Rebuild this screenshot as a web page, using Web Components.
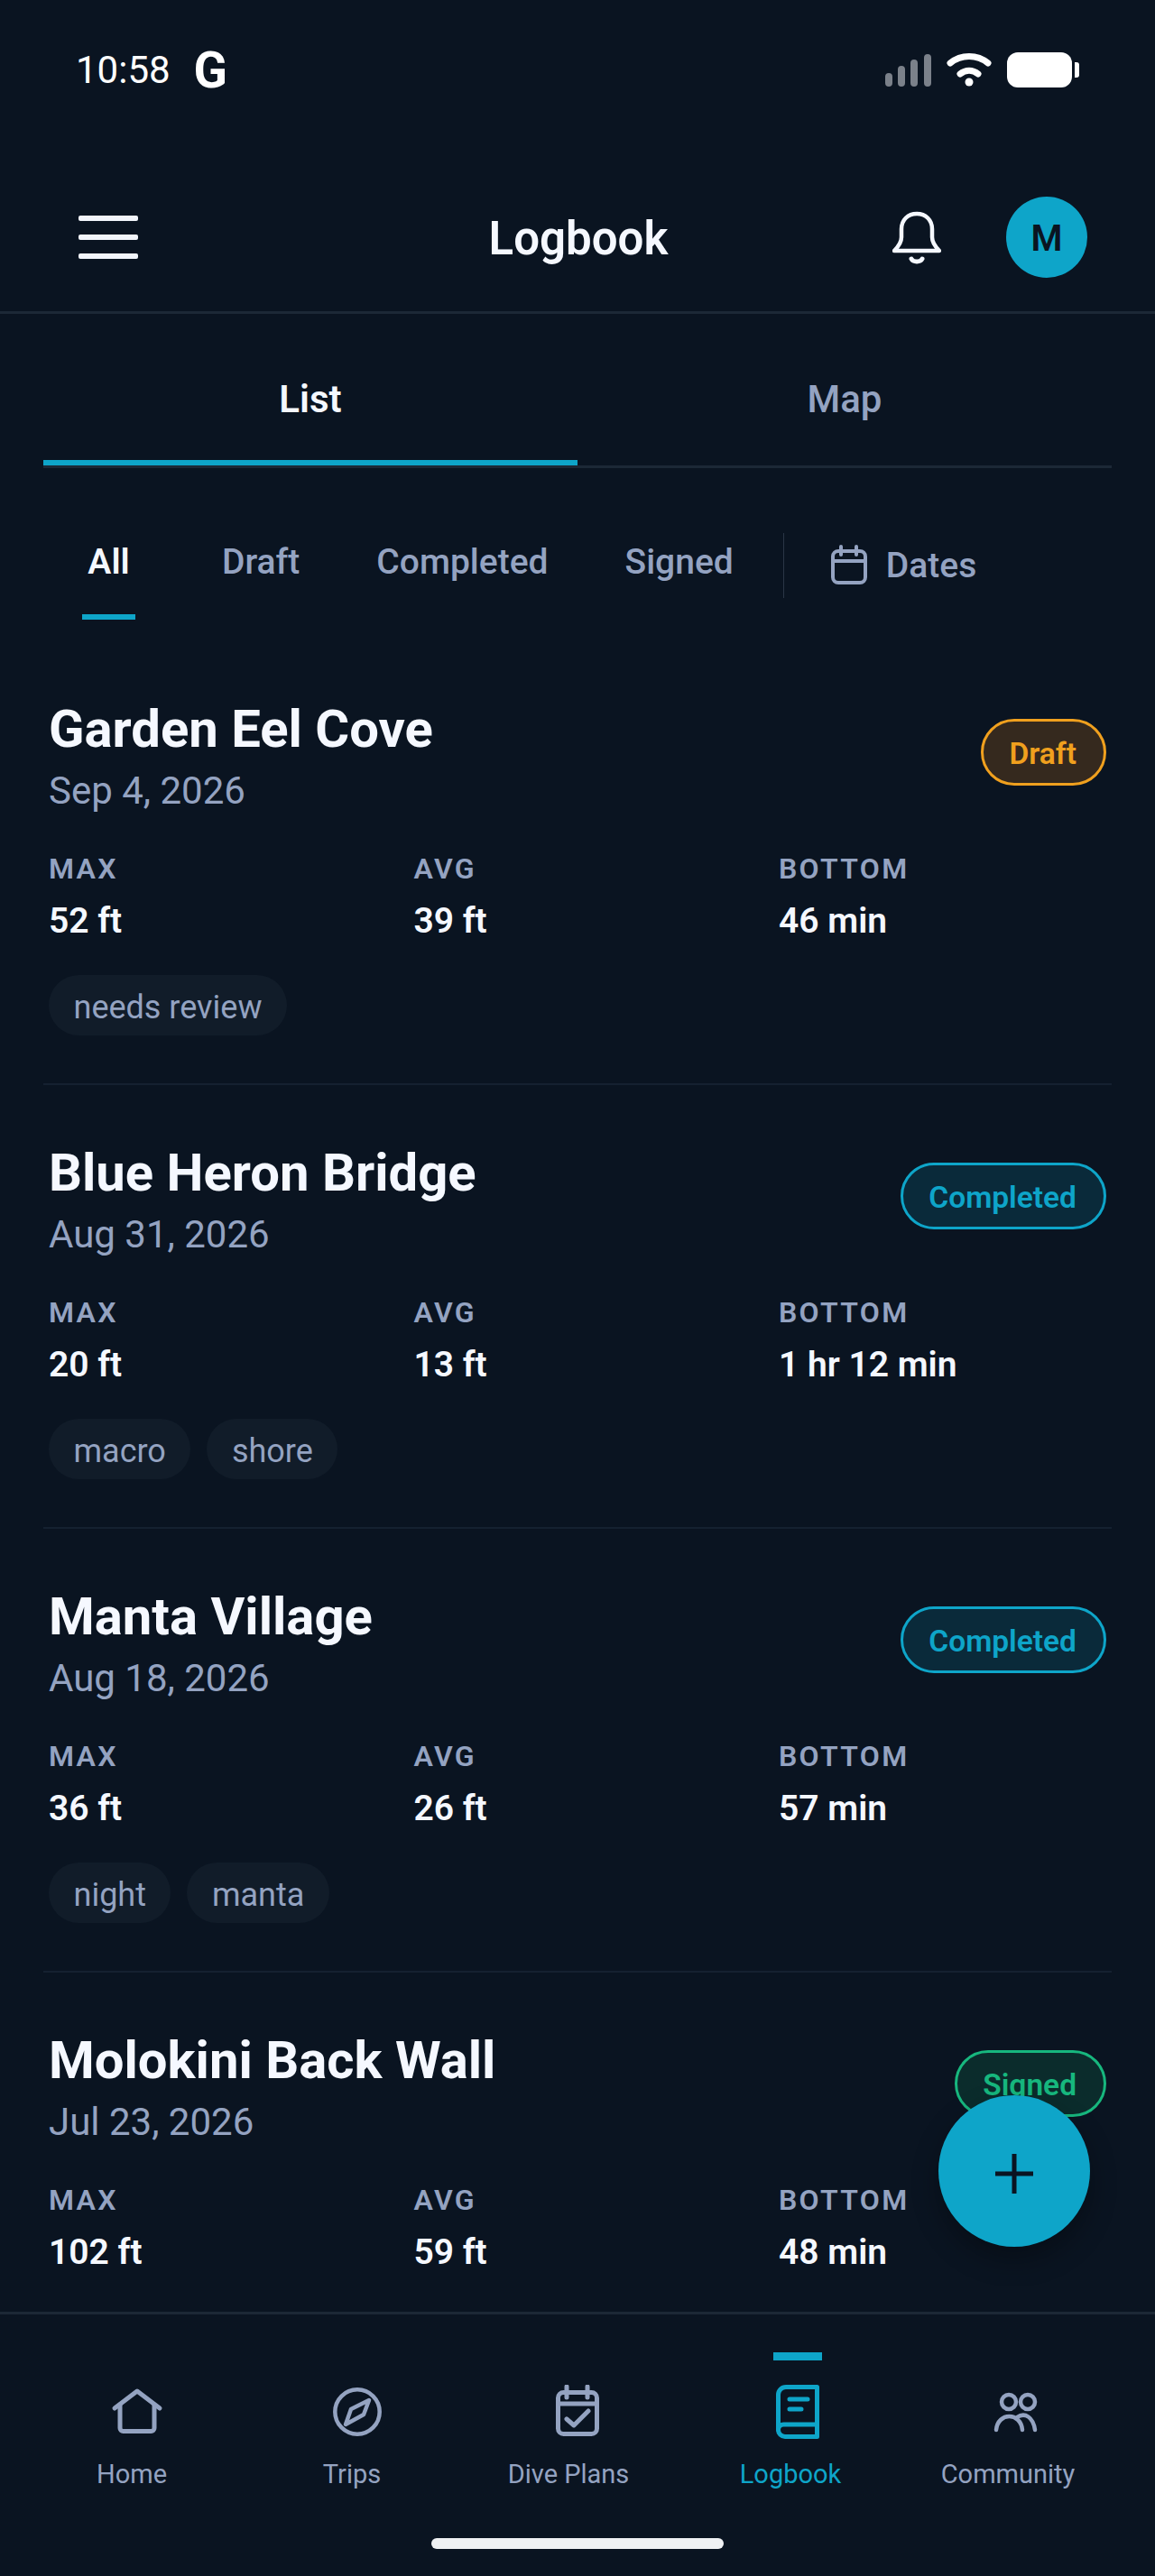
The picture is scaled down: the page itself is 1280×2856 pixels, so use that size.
<!DOCTYPE html>
<html>
<head>
<meta charset="utf-8">
<style>
  html, body { margin: 0; background: #0a1421; }
  body { font-family: Roboto, "Liberation Sans", sans-serif; color: #f5f8ff; }
</style>
</head>
<body>
<logbook-screen>
  <status-bar slot="top" time="10:58"></status-bar>
  <app-header slot="top" title="Logbook" initial="M"></app-header>
  <view-tabs slot="top"></view-tabs>
  <filter-bar slot="top"></filter-bar>

  <dive-card name="Garden Eel Cove" date="Sep 4, 2026" status="Draft" max="52 ft" avg="39 ft" bottom="46 min" tags="needs review"></dive-card>
  <dive-card name="Blue Heron Bridge" date="Aug 31, 2026" status="Completed" max="20 ft" avg="13 ft" bottom="1 hr 12 min" tags="macro,shore"></dive-card>
  <dive-card name="Manta Village" date="Aug 18, 2026" status="Completed" max="36 ft" avg="26 ft" bottom="57 min" tags="night,manta"></dive-card>
  <dive-card name="Molokini Back Wall" date="Jul 23, 2026" status="Signed" max="102 ft" avg="59 ft" bottom="48 min" tags=""></dive-card>

  <bottom-nav slot="bottom"></bottom-nav>
  <fab-button slot="over"></fab-button>
</logbook-screen>

<script>
const MUTED = "#94a3c1";
const TEAL = "#0ea5c9";
const BG = "#0a1421";

class LogbookScreen extends HTMLElement {
  connectedCallback() {
    const root = this.attachShadow({ mode: "open" });
    root.innerHTML = `
    <style>
      :host { display: flex; flex-direction: column; position: relative; width: 1280px; height: 2856px; overflow: hidden; background: ${BG}; }
      .list { flex: 1; min-height: 0; overflow: hidden; display: flex; flex-direction: column; padding: 0 48px; }
    </style>
    <slot name="top"></slot>
    <div class="list"><slot></slot></div>
    <slot name="bottom"></slot>
    <slot name="over"></slot>`;
  }
}

class StatusBar extends HTMLElement {
  connectedCallback() {
    const root = this.attachShadow({ mode: "open" });
    root.innerHTML = `
    <style>
      :host { display: flex; align-items: flex-start; height: 54px; padding: 50px 80px 77px 84px; }
      .time { font-size: 42px; line-height: 54px; margin-top: 1px; color: #fff; }
      .g { font-size: 55px; line-height: 54px; font-weight: 700; color: #fff; margin: 1px 0 0 26px; }
      .right { margin-left: auto; display: flex; }
    </style>
    <span class="time">${this.getAttribute("time")}</span>
    <span class="g">G</span>
    <div class="right">
      <svg width="220" height="54" viewBox="0 0 220 54">
        <g stroke="#7b818a" stroke-width="8" stroke-linecap="round">
          <path d="M5 35v7M19 27v15M33 20v22M48 14v28"/>
        </g>
        <g fill="none" stroke="#fff" stroke-width="7" stroke-linecap="round">
          <path d="M73 20c12-10 30-10 42 0"/>
          <path d="M84 32c6-5 14-5 20 0"/>
        </g>
        <circle cx="94" cy="41" r="4.5" fill="#fff"/>
        <rect x="136" y="8" width="72" height="39" rx="12" fill="#fff"/>
        <path d="M211 19h2a3 3 0 0 1 3 3v11a3 3 0 0 1-3 3h-2z" fill="#fff"/>
      </svg>
    </div>`;
  }
}

class AppHeader extends HTMLElement {
  connectedCallback() {
    const root = this.attachShadow({ mode: "open" });
    root.innerHTML = `
    <style>
      :host { display: flex; align-items: center; height: 164px; border-bottom: 3px solid #1c2836; padding: 0 75px 0 87px; }
      .left, .right { flex: 1; display: flex; align-items: center; }
      .right { justify-content: flex-end; }
      .menu { display: flex; flex-direction: column; gap: 15px; width: 66px; }
      .menu i { display: block; height: 6px; border-radius: 2px; background: #f2f5fb; }
      h1 { margin: 0; padding: 3px 10px 0 0; font-size: 51px; line-height: 60px; font-weight: 600; }
      svg { display: block; margin-right: 72px; }
      .avatar { box-sizing: border-box; width: 90px; height: 90px; padding-top: 2px; border-radius: 50%; background: ${TEAL}; color: ${BG}; display: flex; align-items: center; justify-content: center; font-size: 40px; font-weight: 600; }
    </style>
    <div class="left"><div class="menu"><i></i><i></i><i></i></div></div>
    <h1>${this.getAttribute("title")}</h1>
    <div class="right">
      <svg width="54" height="60" viewBox="0 0 54 60" fill="none" stroke="#f5f8ff" stroke-width="4.5" stroke-linejoin="round" stroke-linecap="round">
        <path d="M10 21c0-10 7-17 17-17s17 7 17 17v9c0 6 4 11 8 15H2c4-4 8-9 8-15z"/>
        <path d="M21 54c2 4 10 4 12 0" stroke-width="5"/>
      </svg>
      <div class="avatar">${this.getAttribute("initial")}</div>
    </div>`;
  }
}

class ViewTabs extends HTMLElement {
  connectedCallback() {
    const root = this.attachShadow({ mode: "open" });
    root.innerHTML = `
    <style>
      :host { display: flex; margin: 0 48px; border-bottom: 3px solid #1c2836; }
      div { flex: 1; height: 168px; box-sizing: border-box; padding-top: 71px; text-align: center; font-size: 42px; line-height: 48px; font-weight: 500; color: ${MUTED}; }
      .on { color: #f5f8ff; font-weight: 600; border-bottom: 6px solid ${TEAL}; }
    </style>
    <div class="on">List</div><div>Map</div>`;
  }
}

class FilterBar extends HTMLElement {
  connectedCallback() {
    const root = this.attachShadow({ mode: "open" });
    root.innerHTML = `
    <style>
      :host { display: flex; align-items: flex-start; height: 192px; padding: 0 0 0 91px; box-sizing: border-box; font-size: 39px; font-weight: 500; color: ${MUTED}; }
      .f { height: 168px; box-sizing: border-box; padding-top: 81px; line-height: 46px; margin-right: 85px; }
      .f.on { color: #f5f8ff; font-weight: 600; width: 59px; text-align: center; margin-right: 96px; border-bottom: 6px solid ${TEAL}; }
      .sep { width: 1px; height: 72px; background: #2a3646; margin: 72px 51px 0 -30px; }
      .dates { display: flex; align-items: center; gap: 20px; padding-top: 85px; line-height: 46px; }
      svg { display: block; }
    </style>
    <div class="f on">All</div>
    <div class="f">Draft</div>
    <div class="f">Completed</div>
    <div class="f">Signed</div>
    <div class="sep"></div>
    <div class="dates">
      <svg width="42" height="46" viewBox="0 0 42 46" fill="none" stroke="${MUTED}" stroke-width="4" stroke-linecap="round">
        <rect x="3" y="7" width="36" height="35" rx="6"/>
        <path d="M3 18h36M12 2v9M29 2v9"/>
      </svg>
      <span>Dates</span>
    </div>`;
  }
}

const BADGE_COLORS = {
  Draft: ["#f0a01e", "#35291e"],
  Completed: [TEAL, "#0a2a3a"],
  Signed: ["#17b77e", "#0b2c2c"]
};

class StatusBadge extends HTMLElement {
  connectedCallback() {
    const root = this.attachShadow({ mode: "open" });
    const c = BADGE_COLORS[this.textContent.trim()];
    root.innerHTML = `
    <style>
      :host { display: block; box-sizing: border-box; height: 74px; padding: 0 30px 0 28.5px; border-radius: 37px; border: 3px solid ${c[0]}; background: ${c[1]}; color: ${c[0]}; font-size: 33.5px; line-height: 71px; font-weight: 600; }
    </style>
    <slot></slot>`;
  }
}

class TagChip extends HTMLElement {
  connectedCallback() {
    const root = this.attachShadow({ mode: "open" });
    root.innerHTML = `
    <style>
      :host { display: block; height: 67px; padding: 0 27.5px; border-radius: 34px; background: #111c29; color: ${MUTED}; font-size: 36px; line-height: 72px; }
    </style>
    <slot></slot>`;
  }
}

class DiveCard extends HTMLElement {
  connectedCallback() {
    const root = this.attachShadow({ mode: "open" });
    const a = (n) => this.getAttribute(n);
    const tags = a("tags").split(",").filter(Boolean).map((t) => `<tag-chip>${t}</tag-chip>`).join("");
    root.innerHTML = `
    <style>
      :host { display: block; flex: none; box-sizing: border-box; height: 492px; padding: 63px 6px 0 6px; border-bottom: 2px solid #152130; }
      .head { display: flex; justify-content: space-between; align-items: flex-start; }
      h2 { margin: 0; font-size: 58px; line-height: 68px; font-weight: 700; color: #f5f8ff; }
      .date { margin-top: 11px; font-size: 42px; line-height: 48px; color: ${MUTED}; }
      status-badge { margin-top: 23px; }
      .stats { display: grid; grid-template-columns: 404.5px 404.5px 1fr; margin-top: 43px; }
      .k { font-size: 32px; line-height: 38px; font-weight: 600; letter-spacing: 2.3px; color: ${MUTED}; }
      .v { margin-top: 16px; font-size: 39px; line-height: 46px; font-weight: 600; color: #f5f8ff; }
      .tags { display: flex; gap: 18px; margin-top: 37px; }
    </style>
    <div class="head">
      <div>
        <h2>${a("name")}</h2>
        <div class="date">${a("date")}</div>
      </div>
      <status-badge>${a("status")}</status-badge>
    </div>
    <div class="stats">
      <div><div class="k">MAX</div><div class="v">${a("max")}</div></div>
      <div><div class="k">AVG</div><div class="v">${a("avg")}</div></div>
      <div><div class="k">BOTTOM</div><div class="v">${a("bottom")}</div></div>
    </div>
    <div class="tags">${tags}</div>`;
  }
}

class NavItem extends HTMLElement {
  connectedCallback() {
    const root = this.attachShadow({ mode: "open" });
    const on = this.hasAttribute("active");
    root.innerHTML = `
    <style>
      :host { flex: 1; display: flex; flex-direction: column; align-items: center; color: ${on ? TEAL : MUTED}; }
      .bar { width: 54px; height: 9px; background: ${on ? TEAL : "transparent"}; margin-top: 42px; }
      .icon { height: 60px; margin-top: 27px; }
      .label { margin-top: 22px; padding-right: ${this.getAttribute("shift") || 0}px; font-size: 29px; line-height: 34px; }
      ::slotted(svg) { display: block; }
    </style>
    <div class="bar"></div>
    <div class="icon"><slot></slot></div>
    <div class="label">${this.getAttribute("label")}</div>`;
  }
}

class BottomNav extends HTMLElement {
  connectedCallback() {
    const root = this.attachShadow({ mode: "open" });
    root.innerHTML = `
    <style>
      :host { display: block; height: 293px; box-sizing: border-box; border-top: 3px solid #1c2836; position: relative; }
      .row { display: flex; padding: 0 30px; }
      .pill { position: absolute; left: 478px; top: 248px; width: 324px; height: 12px; border-radius: 6px; background: #eff1f3; }
    </style>
    <div class="row">
      <nav-item label="Home" shift="12">
        <svg width="60" height="60" viewBox="0 0 60 60" fill="none" stroke="${MUTED}" stroke-width="5" stroke-linecap="round" stroke-linejoin="round">
          <path d="M5 26 30 7l25 19"/><path d="M11 22v26a3.5 3.5 0 0 0 3.5 3.5h31a3.5 3.5 0 0 0 3.5-3.5V22"/>
        </svg>
      </nav-item>
      <nav-item label="Trips" shift="12">
        <svg width="60" height="60" viewBox="0 0 60 60" fill="none" stroke="${MUTED}" stroke-width="4.5" stroke-linejoin="round">
          <circle cx="30" cy="30" r="24.7"/><path d="M43 17 23 27l-6 17 20-11z"/>
        </svg>
      </nav-item>
      <nav-item label="Dive Plans" shift="20">
        <svg width="60" height="60" viewBox="0 0 60 60" fill="none" stroke="${MUTED}" stroke-width="5" stroke-linecap="round" stroke-linejoin="round">
          <rect x="8.5" y="8.5" width="43" height="46" rx="6"/><path d="M8.5 21h43M18 2v12M41 2v12M18 38l8 7 16-16"/>
        </svg>
      </nav-item>
      <nav-item label="Logbook" shift="16" active>
        <svg width="60" height="60" viewBox="0 0 60 60" fill="none" stroke="${TEAL}" stroke-width="5" stroke-linecap="round" stroke-linejoin="round">
          <path d="M51.5 2.5H17A8.5 8.5 0 0 0 8.5 11v39a7.5 7.5 0 0 0 7.5 7.5h35.5z"/><path d="M8.5 50a6 6 0 0 1 6-6h37M21 16h20M21 27h13"/>
        </svg>
      </nav-item>
      <nav-item label="Community" shift="22">
        <svg width="60" height="60" viewBox="0 0 60 60" fill="none" stroke="${MUTED}" stroke-width="4.5" stroke-linecap="round">
          <circle cx="20" cy="19" r="8"/><circle cx="41" cy="19" r="8"/>
          <path d="M6 50C8 30 33 30 35 50"/><path d="M29 36c9-6 18 0 20 14"/>
        </svg>
      </nav-item>
    </div>
    <div class="pill"></div>`;
  }
}

class FabButton extends HTMLElement {
  connectedCallback() {
    const root = this.attachShadow({ mode: "open" });
    root.innerHTML = `
    <style>
      :host { position: absolute; left: 1040px; top: 2323px; width: 168px; height: 168px; border-radius: 50%; background: ${TEAL}; display: flex; align-items: center; justify-content: center; box-shadow: 0 14px 30px rgba(0,0,0,.3); }
      svg { margin: 5px 1px 0 0; }
    </style>
    <svg width="42" height="44" viewBox="0 0 42 44" stroke="${BG}" stroke-width="5"><path d="M21 0v44M0 22h42"/></svg>`;
  }
}

customElements.define("logbook-screen", LogbookScreen);
customElements.define("status-bar", StatusBar);
customElements.define("app-header", AppHeader);
customElements.define("view-tabs", ViewTabs);
customElements.define("filter-bar", FilterBar);
customElements.define("status-badge", StatusBadge);
customElements.define("tag-chip", TagChip);
customElements.define("dive-card", DiveCard);
customElements.define("nav-item", NavItem);
customElements.define("bottom-nav", BottomNav);
customElements.define("fab-button", FabButton);
</script>
</body>
</html>
